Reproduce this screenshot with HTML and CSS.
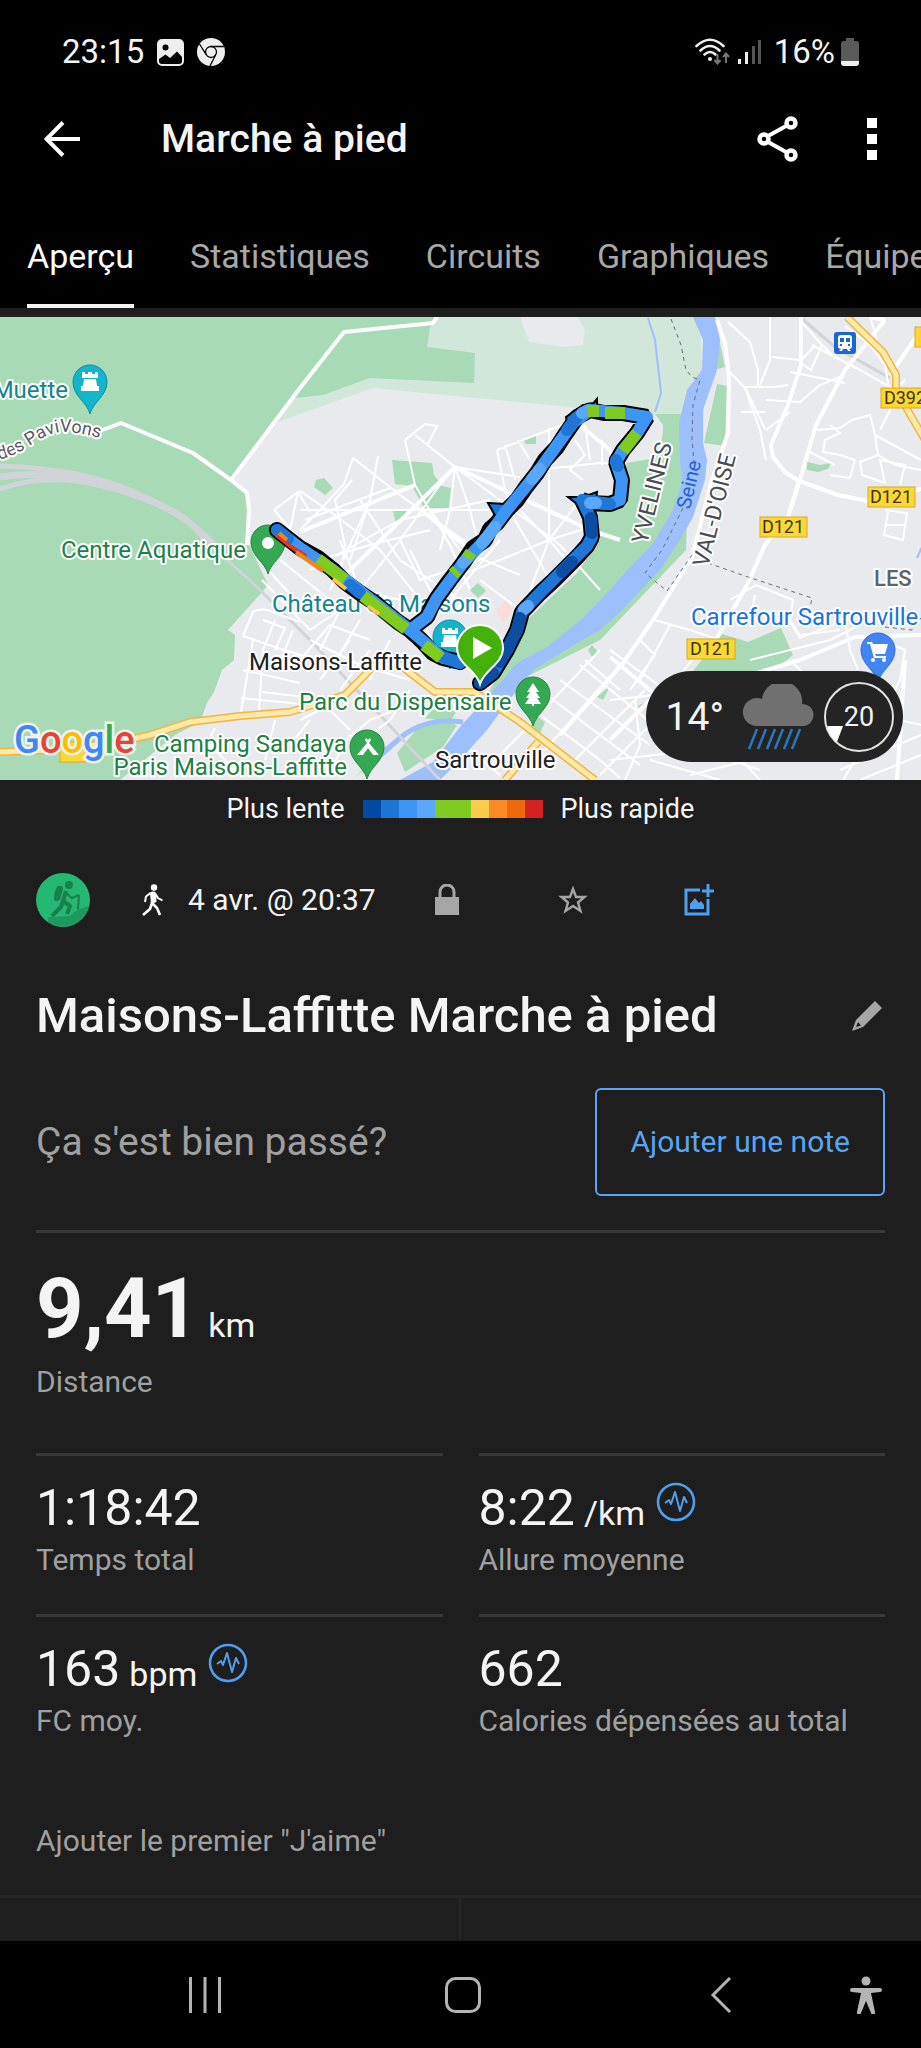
FILE: index.html
```html
<!DOCTYPE html>
<html lang="fr">

<head>

<title>Marche à pied</title>
<meta charset="utf-8">
<meta name="viewport" content="width=device-width, initial-scale=1">

<link rel="stylesheet" href="styles.css">

</head>

<body>

<!-- Barre d'état -->
<div class="status">
	<span class="status-time">23:15</span>
	<svg class="status-photo" width="27" height="27" viewBox="0 0 27 27">
		<path fill="#eee" fill-rule="evenodd" d="M5 0H22a5 5 0 0 1 5 5V22a5 5 0 0 1-5 5H5a5 5 0 0 1-5-5V5a5 5 0 0 1 5-5ZM8.500 5.500a3 3 0 1 0 0 6a3 3 0 1 0 0-6ZM2 20v2q0 3 3 3H22q3 0 3-3V18L20 12.500L13 19L8.500 15.500Z"/>
	</svg>
	<svg width="28" height="28" viewBox="0 0 28 28">
		<circle cx="14" cy="14" r="14" fill="#eee"/>
		<circle cx="14" cy="14" r="5.500" fill="none" stroke="#000" stroke-width="1.300"/>
		<path fill="none" stroke="#000" stroke-width="1.300" d="M14 8.500H27M9.200 16.700L2.500 6M18.700 16.800L13 28"/>
	</svg>
	<span class="status-space"></span>
	<svg class="status-wifi" width="35" height="28" viewBox="0 0 35 28">
		<g fill="none" stroke="#eee" stroke-width="2.600" stroke-linecap="round">
			<path d="M1.500 8Q15 -4.500 28.500 8"/>
			<path d="M5.500 12.500Q15 3.500 24.500 12.500"/>
			<path d="M9.500 16.500Q15 11.500 20.500 16.500"/>
		</g>
		<circle cx="15" cy="21" r="2" fill="#eee"/>
		<path fill="none" stroke="#777" stroke-width="2" d="M22.500 16V25M19.500 22L22.500 25.500L25.500 22M31 25V16M28 19L31 15.500L34 19"/>
	</svg>
	<svg width="24" height="26" viewBox="0 0 24 26">
		<path fill="#eee" d="M0 20h3v5H0zM7 13h3v12H7z"/>
		<path fill="#555" d="M14 7h3v18h-3zM20 1h3v24h-3z"/>
	</svg>
	<span class="status-level">16%</span>
	<svg width="18" height="28" viewBox="0 0 18 28">
		<path fill="#5a5a5a" d="M5 0h8v3h2a3 3 0 0 1 3 3v17H0V6a3 3 0 0 1 3-3h2z"/>
		<path fill="#eee" d="M0 23h18v2a3 3 0 0 1-3 3H3a3 3 0 0 1-3-3z"/>
	</svg>
</div>

<header class="bar">
	<button type="button" class="icon-btn bar-back" aria-label="Retour">
		<svg width="36" height="36" viewBox="0 0 36 36"><path fill="none" stroke="#fff" stroke-width="4" d="M36 18H3M19 1.500L2.500 18L19 34.500"/></svg>
	</button>
	<h1 class="bar-title">Marche à pied</h1>
	<button type="button" class="icon-btn bar-share" aria-label="Partager">
		<svg width="42" height="46" viewBox="0 0 42 46">
			<g fill="none" stroke="#fff">
				<path stroke-width="4" d="M11 20L30 9.500M11 26L30 36.500"/>
				<g stroke-width="4.500"><circle cx="7" cy="23" r="4.500"/><circle cx="34" cy="7" r="4.500"/><circle cx="34" cy="39" r="4.500"/></g>
			</g>
		</svg>
	</button>
	<button type="button" class="icon-btn" aria-label="Plus d'options">
		<svg width="10" height="42" viewBox="0 0 10 42"><path fill="#fff" d="M0 0h10v10H0zM0 16h10v10H0zM0 32h10v10H0z"/></svg>
	</button>
</header>

<nav class="tabs">
	<a href="#apercu" class="tab active">Aperçu</a>
	<a href="#statistiques" class="tab">Statistiques</a>
	<a href="#circuits" class="tab">Circuits</a>
	<a href="#graphiques" class="tab">Graphiques</a>
	<a href="#equipement" class="tab">Équipement</a>
</nav>

<main id="apercu">

<!-- Carte du parcours -->
<div class="map">
	<svg class="map-svg" viewBox="0 317 921 463">
		<defs>
			<path id="pin" d="M0 32C-3 20-17 14-17 0A17 17 0 1 1 17 0C17 14 3 20 0 32Z"/>
			<path id="tower" d="M-8-9v6h16v-6h-3v2h-3v-2h-4v2h-3v-2zM-6-2h12l1 7h2v5h-18v-5h2z"/>
			<path id="pavillons" d="M-1 460Q16 455 28 447Q46 434 60 432Q76 431 110 441"/>
		</defs>

		<!-- terrain -->
		<rect x="0" y="317" width="921" height="463" fill="#e8eaed"/>
		<path fill="#d0e7da" d="M430 317H700L704 415H655Q640 416 600 410L373 388L300 414L270 425L300 388Z"/>
		<path fill="#e8eaed" d="M520 317L529 342L563 347L583 345L585 330L578 317Z"/>
		<path fill="#a8dab5" d="M0 317H437L430 327L427 347L475 353L474 383L370 378L323 395L295 398L231 481L247 493L249 510L247 540L268 585L262 592L228 630L235 635L234 660L222 670L214 692L207 703L200 722L175 735L120 780H0Z"/>
		<path fill="#a8dab5" d="M655 414H690L686 550L600 640L520 680L487 695L513 650L527 620L577 573L600 540L598 510L620 505L627 463L650 459Q664 447 663 425Z"/>
		<path fill="#a8dab5" d="M715 320L725 367L717 369ZM717 384L727 386L725 446L704 443ZM392 460L432 463L434 475L442 486L451 488L449 508L424 508L412 486L395 484ZM393 511L408 511L396 524ZM316 480L324 478L333 488L325 495L314 487ZM523 440L536 435V444H526ZM807 462L820 465L831 463L828 469L818 472L807 470ZM722 634L748 642L781 628L793 655L767 675H690ZM470 590L478 583L486 591L478 598ZM588 650L592 645L598 652L592 657ZM597 697L610 686L603 700ZM535 715L545 722L540 733L530 724ZM638 706L645 702L641 713Z"/>
		<path fill="#a8dab5" d="M420 725Q440 718 457 725L443 747L405 772L397 753ZM438 704L456 712L450 722L425 718ZM355 778L380 750L395 741Z"/>
		<path fill="#9dbffb" d="M693 317L703 340L702 370L687 390L679 423L680 460L682 483L673 510L652 545L630 567L610 590L583 618L547 647L517 663L500 683L480 705L460 727L433 762L400 780H440L460 760L487 730L507 703L533 670L577 643L600 630L620 612L660 570L680 540L693 517L705 480L707 460L703 443V410L717 370L720 340L715 317Z"/>
		<path fill="none" stroke="#9dbffb" stroke-width="5" d="M463 722Q425 717 400 738L375 760"/>
		<path fill="none" stroke="#9dbffb" stroke-width="2" d="M648 318L655 340L661 393L655 412M922 547L917 558"/>
		<path fill="#fbdcdc" d="M496 610L508 598L512 612L503 624Z"/>

		<!-- voies ferrées -->
		<g fill="none" stroke="#d0d3d8">
			<path stroke-width="7" d="M0 477Q50 468 120 490T205 540"/>
			<path stroke-width="5" d="M0 466Q80 468 135 492T215 545M0 489Q50 471 110 488"/>
			<path stroke-width="3" d="M205 540L255 585L310 640L380 715L440 780M800 317L835 347L890 378"/>
		</g>

		<!-- petites rues -->
		<g class="street">
			<path d="M300 491L335 515L380 550L420 600L430 640M353 458L400 495L470 545M353 458L344 484L320 510L300 530M300 510H500M274 510L298 492L310 512M274 510L300 540M298 492L290 530M305 520L390 488M378 456L370 500L350 560M352 480L335 500L345 545L340 580M405 440L415 485L450 545L470 590M405 440L425 424L437 426L428 444M415 435L455 467L440 485L400 540L360 590M455 467L500 500L560 545L600 590M455 467L450 510L440 550M455 467L470 510L480 550M455 467L520 477M497 450L505 490L515 520L550 580M497 450L570 422M505 445L515 480M518 440L530 460M549 428V540M549 540L500 560L460 575M549 540L590 527M549 540L520 510M549 540L580 500M549 540L530 590M549 540L575 570M535 470L600 463L620 463M585 425L590 460M602 440V465M575 440L585 455L570 470L583 480"/>
			<path d="M320 560L370 545L430 530M330 590L370 500M340 540L360 590L400 600M400 540L420 580L480 560M310 570L400 520L490 500M360 500L400 560L460 600M430 510L460 550L520 575M470 540L420 610M410 550L440 610L490 600M500 540L450 600M480 580L520 610"/>
			<path d="M243 636L253 612Q262 606 278 614L300 622M243 636L275 647L310 658M253 640L241 712M275 620L263 650L259 711M263 620L285 628L275 650M293 630L280 662M243 670L300 683M241 698L300 704M262 692L305 697M310 640L360 665L410 680M300 660L330 625L370 640M320 680L350 640M340 690L370 650M310 630L340 610M262 580L310 630M280 560L330 600M268 570L300 605M340 610L320 650M360 620L330 670M390 640L370 680M300 720L330 705M340 745L370 720L420 700M350 730L330 710M330 770L350 735M410 690L390 720L350 750M275 720L265 760M310 720L290 745M205 740L240 775M215 728L200 755"/>
			<path d="M520 700L600 760L620 778M540 690L640 765M560 680L650 745M580 665L660 730M520 735L600 650M545 750L620 665M570 765L645 690M490 765L530 725M600 775L660 715M585 660L620 690M470 750L500 775M610 650L700 715L760 780M640 640L655 655L630 690M654 620L690 630L720 640M670 625L640 680M700 650L660 700M610 700L700 690M635 700L640 745L625 780M610 760L700 750L760 770M650 760L720 780M690 775L750 760M730 600L756 585L793 600L790 620L800 635L840 630M753 605L755 595M790 622L800 638L845 620L850 650L858 670M750 660L830 640L860 625M790 660L810 680M880 640L905 650L900 680L890 700M840 770L921 735M860 780L921 755M843 780L870 735M900 720L921 725"/>
			<path d="M728 322L750 342L758 370V386M728 370L745 388L760 430L766 460M770 317L770 360L760 385M772 357L800 360M745 387H775L788 385M745 387L765 429M741 412H765M766 400L800 402L820 385L845 375M766 430L790 412M800 320L822 345L811 370L800 362L815 345M812 345L860 370L921 405M822 345L835 358M845 326L870 345L885 365L890 395L905 380M790 372L845 383M817 430L840 428L852 420L870 415L875 435L878 455L895 465L921 470M830 425L840 433L825 440L823 452L840 455L855 460M855 460L850 478L830 475M878 455L860 462L862 475L885 483L880 460L905 465L900 485M885 510L907 513L903 540L884 535L888 512M885 525H905M870 317L877 340M900 390L880 430M875 435L921 460M810 452L835 465"/>
		</g>

		<!-- rues principales -->
		<g class="road">
			<path d="M97 432L121 423L193 453L231 480L247 493L249 510L247 545M231 480L300 388L344 332L433 323L437 317"/>
			<path d="M717 320L725 343L729 377L728 433L712 480L692 557L653 620L623 663L600 690L560 735M801 317V365L788 405L771 445L773 457L785 472L799 481L838 495L868 501M921 489L905 493M885 320L845 370L816 425L800 480L788 517L765 545L747 585L710 650M799 481L790 510M921 635L855 637L800 660L700 690L650 700L610 740M870 317L885 320M455 467L340 580M455 467L590 530L620 540M610 657L650 690L720 735M300 532L415 485M897 780L905 660"/>
			<path d="M921 330L890 375M580 425L610 450L618 470M420 509L470 550"/>
		</g>

		<!-- départementales -->
		<g class="main-edge">
			<path d="M0 752L50 750Q110 745 150 735L190 722L240 716L290 712L345 695L378 662L400 665L435 692H475L520 722L595 780"/>
			<path d="M847 317L883 352L896 375V390L925 440M538 742L505 780"/>
		</g>
		<g class="main-fill">
			<path d="M0 752L50 750Q110 745 150 735L190 722L240 716L290 712L345 695L378 662L400 665L435 692H475L520 722L595 780"/>
			<path d="M847 317L883 352L896 375V390L925 440M538 742L505 780"/>
		</g>
		<path class="limit" d="M671 319L681 345L686 370L692 377L700 380L693 405L692 440L694 462M683 508L662 550L645 573L667 591L692 555M708 563L745 576L812 598L810 608M885 627L912 630L921 618"/>

		<!-- repères -->
		<g stroke-width="1">
			<use href="#pin" x="90" y="382" fill="#12b5cb" stroke="#0f8d9e"/>
			<use href="#tower" x="90" y="381" fill="#fff" stroke="none"/>
			<use href="#pin" x="268" y="542" fill="#34a853" stroke="#268540"/>
			<circle cx="268" cy="543" r="6" fill="#fff"/>
			<use href="#pin" x="450" y="637" fill="#12b5cb" stroke="#0f8d9e"/>
			<use href="#tower" x="450" y="637" fill="#fff" stroke="none"/>
			<use href="#pin" x="533" y="694" fill="#34a853" stroke="#268540"/>
			<path fill="#fff" d="M533 683L539 692H536L540 698H537L541 704H534V706H532V704H525L529 698H526L530 692H527Z"/>
			<use href="#pin" x="367" y="747" fill="#34a853" stroke="#268540"/>
			<path fill="#fff" fill-rule="evenodd" d="M366 738L368 740L370 738L371 740L369 743L379 755H357L367 743L365 740ZM368 748L363 755H373Z"/>
			<use href="#pin" x="878" y="650" fill="#4285f4" stroke="#3369d6"/>
			<path fill="#fff" d="M867 642h5l1 2h15l-3 10h-10l1 2h10v2h-12l-4-14h-3z"/>
			<circle cx="873" cy="660" r="2" fill="#fff"/><circle cx="884" cy="660" r="2" fill="#fff"/>
			<rect x="834" y="332" width="22" height="22" rx="3" fill="#1a67d2"/>
			<path fill="#fff" fill-rule="evenodd" d="M841 335h8a3 3 0 0 1 3 3v8a3 3 0 0 1-3 3l2 2h-3l-1-2h-4l-1 2h-3l2-2a3 3 0 0 1-3-3v-8a3 3 0 0 1 3-3zM840 338v4h4v-4zM846 338v4h4v-4zM840 344v2h2v-2zM848 344v2h2v-2z"/>
		</g>

		<!-- noms -->
		<g class="name">
			<text class="teal" x="68" y="398" text-anchor="end">Muette</text>
			<text class="way"><textPath href="#pavillons">des PaviVons</textPath></text>
			<text class="green" x="61" y="558">Centre Aquatique</text>
			<text class="teal" x="272" y="612">Château de Maisons</text>
			<text class="town" x="249" y="670">Maisons-Laffitte</text>
			<text class="green" x="299" y="710">Parc du Dispensaire</text>
			<text class="green" x="154" y="752">Camping Sandaya</text>
			<text class="green" x="347" y="775" text-anchor="end">Paris Maisons-Laffitte</text>
			<text class="town" x="435" y="768">Sartrouville</text>
			<text class="shop" x="691" y="625">Carrefour Sartrouville</text>
			<text class="area" x="874" y="586">LES</text>
			<text class="dept" transform="translate(647 545) rotate(-76)">YVELINES</text>
			<text class="dept" transform="translate(708 568) rotate(-76)">VAL-D'OISE</text>
			<text class="river" transform="translate(690 510) rotate(-77)">Seine</text>
		</g>

		<g class="badge">
			<rect x="760" y="517" width="47" height="20"/><text x="783" y="533">D121</text>
			<rect x="868" y="487" width="47" height="20"/><text x="891" y="503">D121</text>
			<rect x="687" y="639" width="48" height="20"/><text x="711" y="655">D121</text>
			<rect x="881" y="388" width="50" height="20"/><text x="905" y="404">D392</text>
			<rect x="915" y="327" width="40" height="20"/>
			<rect x="60" y="742" width="26" height="20"/>
		</g>

		<!-- trace -->
		<path class="track-edge" d="M277 530L300 548L318 558L333 570L345 582L360 593L375 603L387 613L398 622L410 630L422 641L433 653L443 658L460 662M410 630L427 617L432 606L437 598L450 580L463 563L473 548L485 540L490 529L497 523L507 510L517 500L526 487L537 473L545 460L557 447L564 436L573 423L577 417L590 410L604 413L623 413L647 417L637 433L623 450L616 462L622 480L620 500L610 504L590 503L582 500L590 517L592 537L587 546L577 557L567 567L553 581L540 593L522 612L517 630L507 650L493 673L480 683"/>
		<path fill="#1e76d8" stroke="#000" stroke-width="2" d="M488 503L506 504L514 500L497 519ZM566 417L583 405L591 406L597 399L597 409L588 419L568 428ZM568 497H583L597 492L596 502L586 511Z"/>
		<g class="track">
			<path stroke="#3d96f5" d="M277 530L300 548L333 570L410 630L443 658L460 662M410 630L427 617L437 598L463 563L485 540L507 510L537 473L573 423L590 410L623 413L647 417L637 433L623 450L616 462L622 480L620 500L610 504L590 503"/>
			<path stroke="#1e76d8" d="M277 530L288 539M350 585L360 593M395 620L400 624M443 657L460 663M567 430L577 417M616 460L618 466M610 504L582 500L590 517L592 537L587 546L540 593L522 612L517 630L507 650L493 673L480 683"/>
			<path stroke="#59a8fb" d="M463 563L468 557M482 543L495 527M532 479L540 469M582 413L588 410M590 503L596 503M524 609L528 606"/>
			<path stroke="#0a4da2" d="M591 518L592 533M562 572L572 562M520 618L517 630L507 650L500 662M493 673L480 683"/>
		</g>
		<g class="track track-cut">
			<path stroke="#7fcb1f" d="M318 559L345 580M363 596L406 629M424 645L441 658M453 574L457 570M467 558L471 552M588 411L599 411M605 413L625 413M637 433L623 451"/>
		</g>
		<g class="track-thin">
			<path stroke="#e0381c" d="M276 535L290 546L306 556"/>
			<path stroke="#f58220" d="M296 552L323 571M279 533L287 540"/>
			<path stroke="#f9c846" d="M333 579L346 589M368 606L379 614"/>
		</g>
		<path fill="#43b10a" stroke="#fff" stroke-width="2" d="M480 684C476 670 457 664 457 648A23 23 0 1 1 503 648C503 664 484 670 480 684Z"/>
		<path fill="#fff" d="M473 637L492 648L473 659Z"/>

		<text class="logo" x="14" y="753"><tspan fill="#4285f4">G</tspan><tspan fill="#ea4335">o</tspan><tspan fill="#fbbc05">o</tspan><tspan fill="#4285f4">g</tspan><tspan fill="#34a853">l</tspan><tspan fill="#ea4335">e</tspan></text>
	</svg>

	<div class="weather">
		<span class="weather-temp">14°</span>
		<svg width="72" height="66" viewBox="0 0 72 66">
			<path fill="#707070" d="M14 42A14 14 0 1 1 20 15A20 20 0 0 1 60 20A11 11 0 0 1 61 42Z"/>
			<path stroke="#2a78c0" stroke-width="2.500" d="M15 45L7 65M24 45L16 65M33 45L25 65M41 45L33 65M50 45L42 65M58 45L50 65"/>
		</svg>
		<span class="weather-wind">
			<svg class="wind-ring" width="70" height="70" viewBox="0 0 70 70">
				<circle cx="35" cy="35" r="34" fill="none" stroke="#e6e3e0" stroke-width="2"/>
				<path fill="#fff" d="M3 44H19L13 60Q5 54 3 44Z"/>
			</svg>
			<span class="wind-value">20</span>
		</span>
	</div>
</div>

<div class="legend">
	<span class="legend-slow">Plus lente</span>
	<span class="legend-scale">
		<i class="s1"></i><i class="s2"></i><i class="s3"></i><i class="s4"></i><i class="s5"></i><i class="s5"></i><i class="s6"></i><i class="s7"></i><i class="s8"></i><i class="s9"></i>
	</span>
	<span class="legend-fast">Plus rapide</span>
</div>

<section class="meta">
	<svg width="54" height="54" viewBox="0 0 54 54">
		<circle cx="27" cy="27" r="27" fill="#25b872"/>
		<path fill="#1d9a5f" d="M12 44L34 43Q40 36 53 33A27 27 0 0 1 12 49Z"/>
		<circle cx="33" cy="12" r="4" fill="#187f4e"/>
		<path fill="#187f4e" d="M22 13Q27 12 27 16L24 27Q20 29 18 27Q18 17 22 13Z"/>
		<path fill="none" stroke="#187f4e" stroke-width="4" stroke-linejoin="round" d="M30 18L27 28L25 34L16 43M27 28L34 33L31 41"/>
		<path fill="none" stroke="#187f4e" stroke-width="2" d="M30 20L36 25L43 22M43 22L42 36"/>
	</svg>
	<svg class="meta-walk" width="22" height="32" viewBox="0 0 22 32">
		<circle cx="12" cy="3.500" r="3.200" fill="#fff"/>
		<path fill="none" stroke="#fff" stroke-width="2.600" stroke-linejoin="round" d="M11.500 9L10 19L15 24L18 31M10 19L8 25L1 31"/>
		<path fill="#fff" d="M8 8.500Q12 6.500 14 9L14.500 18L9 20Z"/>
		<path fill="none" stroke="#fff" stroke-width="2" d="M8.500 9L4 12.500L3 18M13.500 10L16 14L20.500 16.500"/>
	</svg>
	<time class="meta-date">4 avr. @ 20:37</time>
	<button type="button" class="icon-btn meta-btn" aria-label="Confidentialité">
		<svg width="26" height="32" viewBox="0 0 26 32"><path fill="#a6a6a6" d="M1 13h24v18H1z"/><path fill="none" stroke="#a6a6a6" stroke-width="3" d="M6 14V8a7 7 0 0 1 14 0V14"/></svg>
	</button>
	<button type="button" class="icon-btn meta-btn" aria-label="Favori">
		<svg width="30" height="30" viewBox="0 0 30 30"><path fill="none" stroke="#a6a6a6" stroke-width="2.400" d="M15 4L18 12L26.500 12L20 17.500L22.500 26L15 21L7.500 26L10 17.500L3.500 12L12 12Z"/></svg>
	</button>
	<button type="button" class="icon-btn meta-btn" aria-label="Ajouter une photo">
		<svg width="30" height="32" viewBox="0 0 30 32">
			<path fill="none" stroke="#4f9ff0" stroke-width="3" d="M16 6H2V30H24V15M24 0V13M18 7H30"/>
			<path fill="#4f9ff0" d="M6 25V20L11 14L15 19L17 17L20 21V25Z"/>
		</svg>
	</button>
</section>

<section class="heading">
	<h2 class="heading-name">Maisons-Laffitte Marche à pied</h2>
	<button type="button" class="icon-btn" aria-label="Modifier">
		<svg width="30" height="30" viewBox="0 0 30 30"><path fill="#a6a6a6" fill-rule="evenodd" d="M23 0L30 7L11 26L0 30L4 19ZM6 21L4 26L9 24.500Z"/></svg>
	</button>
</section>

<section class="note">
	<p class="note-ask">Ça s'est bien passé?</p>
	<button type="button" class="note-btn">Ajouter une note</button>
</section>

<section class="stats">
	<div class="stat stat-main">
		<div class="value"><span class="big">9,41</span><span class="unit">km</span></div>
		<div class="label">Distance</div>
	</div>
	<div class="stat">
		<div class="value"><span class="num">1:18:42</span></div>
		<div class="label">Temps total</div>
	</div>
	<div class="stat">
		<div class="value"><span class="num">8:22</span><span class="unit">/km</span>
			<svg class="pulse" width="40" height="40" viewBox="0 0 40 40"><circle cx="20" cy="20" r="18" fill="none" stroke="#4f9ff0" stroke-width="2.600"/><path fill="none" stroke="#4f9ff0" stroke-width="2" stroke-linejoin="round" d="M9 21L13 18L15 22L19 10L24 29L28 15L31 21"/></svg>
		</div>
		<div class="label">Allure moyenne</div>
	</div>
	<div class="stat">
		<div class="value"><span class="num">163</span><span class="unit">bpm</span>
			<svg class="pulse" width="40" height="40" viewBox="0 0 40 40"><circle cx="20" cy="20" r="18" fill="none" stroke="#4f9ff0" stroke-width="2.600"/><path fill="none" stroke="#4f9ff0" stroke-width="2" stroke-linejoin="round" d="M9 21L13 18L15 22L19 10L24 29L28 15L31 21"/></svg>
		</div>
		<div class="label">FC moy.</div>
	</div>
	<div class="stat">
		<div class="value"><span class="num">662</span></div>
		<div class="label">Calories dépensées au total</div>
	</div>
</section>

<p class="likes">Ajouter le premier "J'aime"</p>

<div class="actions"><div class="action"></div><div class="action"></div></div>

</main>

<!-- Barre de navigation du téléphone -->
<footer class="keys">
	<button type="button" class="icon-btn" aria-label="Applications récentes">
		<svg width="36" height="36" viewBox="0 0 36 36"><path fill="none" stroke="#b4b4b4" stroke-width="3" d="M3.500 0V36M18 0V36M32.500 0V36"/></svg>
	</button>
	<button type="button" class="icon-btn" aria-label="Accueil">
		<svg width="36" height="36" viewBox="0 0 36 36"><rect x="1.500" y="1.500" width="33" height="33" rx="9" fill="none" stroke="#b4b4b4" stroke-width="3"/></svg>
	</button>
	<button type="button" class="icon-btn" aria-label="Précédent">
		<svg width="22" height="36" viewBox="0 0 22 36"><path fill="none" stroke="#b4b4b4" stroke-width="3" d="M20 1L3 18L20 35"/></svg>
	</button>
	<button type="button" class="icon-btn" aria-label="Accessibilité">
		<svg width="32" height="38" viewBox="0 0 32 38"><circle cx="16" cy="5" r="4.500" fill="#b4b4b4"/><path fill="#b4b4b4" d="M2 12H30a2 2 0 0 1 0 4L21 17L25 36a2 2 0 0 1-4 1L16 25L11 37a2 2 0 0 1-4-1L11 17L2 16a2 2 0 0 1 0-4z"/></svg>
	</button>
</footer>

</body>

</html>
```

FILE: styles.css
```css
* {
	box-sizing: border-box;
}

body {
	margin: 0;
	min-height: 100vh;
	display: flex;
	flex-direction: column;
	background: #000;
	color: #f4f4f4;
	font-family: Roboto, "Liberation Sans", sans-serif;
	font-size: 30px;
	line-height: 36px;
	overflow-x: hidden;
}

h1, h2, p {
	margin: 0;
	font-weight: 500;
}

svg {
	display: block;
	flex: none;
}

.icon-btn {
	display: flex;
	align-items: center;
	justify-content: center;
	padding: 0;
	border: none;
	background: none;
	cursor: pointer;
}

/* barre d'état */
.status {
	display: flex;
	align-items: center;
	height: 104px;
	padding: 0 62px;
	font-size: 33px;
}

.status-photo {
	margin: 0 13px;
}

.status-space {
	flex: 1;
}

.status-wifi {
	margin-right: 8px;
}

.status-level {
	margin: 0 6px 0 12px;
}

/* titre */
.bar {
	display: flex;
	align-items: center;
	height: 70px;
	padding: 0 44px;
}

.bar-back {
	margin-right: 81px;
}

.bar-title {
	flex: 1;
	font-size: 39px;
}

.bar-share {
	margin-right: 68px;
}

.tabs {
	display: flex;
	gap: 56px;
	padding: 34px 0 0 27px;
	overflow: hidden;
}

.tab {
	flex: none;
	line-height: 96px;
	border-bottom: 4px solid transparent;
	color: #a8a8a8;
	font-size: 34px;
	text-decoration: none;
}

.tab.active {
	color: #fff;
	border-color: #f4f4f4;
}

main {
	flex: 1;
	display: flex;
	flex-direction: column;
	padding-top: 9px;
	background: #1e1e1e;
}

/* carte */
.map {
	position: relative;
}

.map-svg {
	width: 100%;
	height: auto;
}

.street {
	fill: none;
	stroke: #fff;
	stroke-width: 2;
}

.road {
	fill: none;
	stroke: #fff;
	stroke-width: 4;
	stroke-linejoin: round;
}

.main-edge {
	fill: none;
	stroke: #f0b440;
	stroke-width: 8;
	stroke-linejoin: round;
}

.main-fill {
	fill: none;
	stroke: #ffe9a6;
	stroke-width: 5;
	stroke-linejoin: round;
}

.limit {
	fill: none;
	stroke: #6b6f75;
	stroke-width: 1;
	stroke-dasharray: 4 4;
}

.name {
	font-size: 24px;
	stroke: #fff;
	stroke-width: 4;
	stroke-linejoin: round;
	paint-order: stroke;
}

.teal {
	fill: #12858e;
}

.green {
	fill: #1d8045;
}

.town {
	fill: #202124;
}

.shop {
	fill: #1a73d9;
}

.way {
	fill: #5a5860;
	font-size: 18px;
}

.area {
	fill: #5f6368;
	font-size: 22px;
	font-weight: 500;
}

.dept {
	fill: #4a4d52;
	font-size: 23px;
}

.river {
	fill: #2563d0;
	font-size: 20px;
	stroke: none;
}

.badge rect {
	fill: #fdd835;
	stroke: #d9a820;
	stroke-width: 1;
}

.badge text {
	fill: #3a3520;
	font-size: 18px;
	text-anchor: middle;
}

.track-edge {
	fill: none;
	stroke: #000;
	stroke-width: 16;
	stroke-linejoin: bevel;
	stroke-linecap: round;
}

.track {
	fill: none;
	stroke-width: 12;
	stroke-linejoin: round;
	stroke-linecap: round;
}

.track-cut {
	stroke-linecap: butt;
}

.track-thin {
	fill: none;
	stroke-width: 4;
}

.logo {
	font-size: 38px;
	font-weight: 500;
	stroke: #eef4f0;
	stroke-width: 5;
	paint-order: stroke;
}

.weather {
	position: absolute;
	right: 18px;
	bottom: 18px;
	display: flex;
	align-items: center;
	height: 91px;
	padding: 0 9px 0 20px;
	border-radius: 46px;
	background: #242424;
}

.weather-temp {
	margin-right: 18px;
	font-size: 39px;
}

.weather-wind {
	display: grid;
	place-items: center;
	margin-left: 10px;
}

.wind-ring, .wind-value {
	grid-area: 1 / 1;
}

.wind-value {
	font-size: 27px;
}

.legend {
	display: grid;
	grid-template-columns: 1fr auto 1fr;
	align-items: center;
	column-gap: 18px;
	height: 58px;
	padding-right: 16px;
	font-size: 27px;
}

.legend-slow {
	text-align: right;
}

.legend-scale {
	display: flex;
}

.legend-scale i {
	width: 18px;
	height: 18px;
}

.s1 { background: #0049a5; }
.s2 { background: #1b75d3; }
.s3 { background: #3d96f5; }
.s4 { background: #59a8fb; }
.s5 { background: #80cb20; }
.s6 { background: #fbcc4c; }
.s7 { background: #fb8a24; }
.s8 { background: #ee690c; }
.s9 { background: #d42121; }

/* infos de l'activité */
.meta {
	display: flex;
	align-items: center;
	height: 124px;
	padding: 0 36px;
}

.meta-walk {
	margin: 0 24px 0 52px;
}

.meta-date {
	margin-right: 8px;
}

.meta-btn {
	width: 126px;
}

.heading {
	display: flex;
	align-items: center;
	justify-content: space-between;
	height: 108px;
	padding: 0 39px 0 36px;
}

.heading-name {
	font-size: 49px;
}

.note {
	display: flex;
	align-items: center;
	justify-content: space-between;
	margin: 0 36px;
	padding: 18px 0 34px;
	border-bottom: 3px solid #383838;
}

.note-ask {
	color: #a0a0a0;
	font-size: 39px;
	font-weight: 400;
}

.note-btn {
	height: 108px;
	padding: 0 33px;
	border: 2px solid #5aa5f2;
	border-radius: 6px;
	background: none;
	color: #5aa5f2;
	font: inherit;
	cursor: pointer;
}

.stats {
	display: grid;
	grid-template-columns: 1fr 1fr;
	column-gap: 36px;
	padding: 0 36px;
}

.stat {
	padding: 23px 0 36px;
	border-top: 3px solid #383838;
}

.stat-main {
	grid-column: 1 / 3;
	padding: 26px 0 53px;
	border-top: none;
}

.value {
	display: flex;
	align-items: baseline;
	margin-bottom: 5px;
}

.big {
	font-size: 83px;
	font-weight: 700;
	line-height: 100px;
}

.num {
	font-size: 50px;
	line-height: 58px;
}

.unit {
	margin-left: 9px;
	font-size: 34px;
}

.pulse {
	align-self: flex-start;
	margin: 3px 0 0 11px;
}

.label {
	color: #a0a0a0;
}

.likes {
	padding: 48px 36px 36px;
	color: #a0a0a0;
	font-weight: 400;
}

.actions {
	flex: 1;
	display: grid;
	grid-template-columns: 1fr 1fr;
	min-height: 45px;
	border-top: 3px solid #262626;
}

.action:first-child {
	border-right: 2px solid #262626;
}

.keys {
	display: grid;
	grid-template-columns: 8fr 8fr 8fr 1fr;
	height: 107px;
	padding: 0 39px 0 76px;
}
```
